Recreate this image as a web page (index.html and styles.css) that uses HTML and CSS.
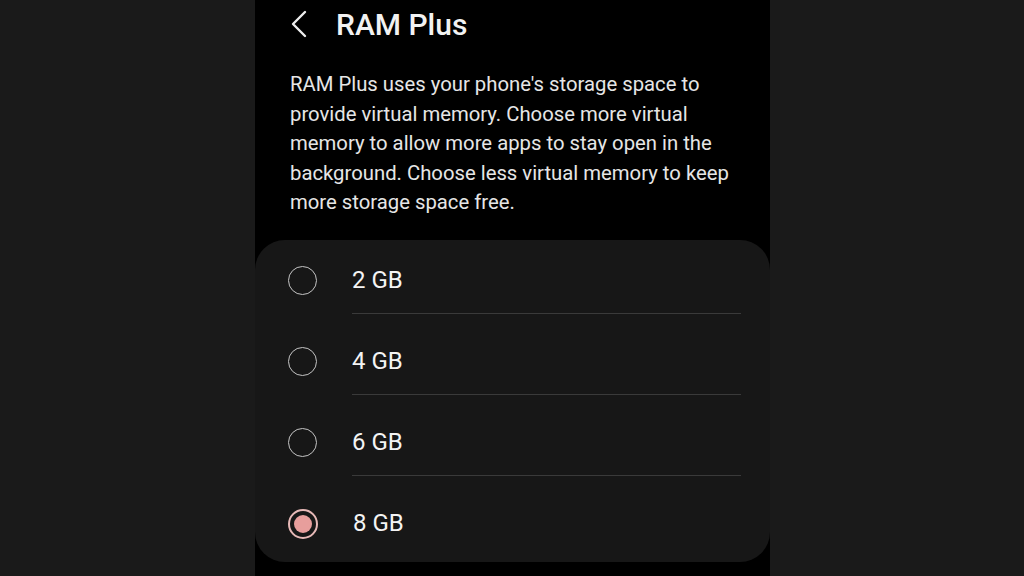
FILE: index.html
```html
<!DOCTYPE html>
<html lang="en">
<head>
<meta charset="utf-8">
<title>RAM Plus</title>
<link rel="stylesheet" href="styles.css">
</head>
<body>
<div class="screen">
  <header class="header">
    <svg class="back" width="16" height="28" viewBox="0 0 16 28" aria-hidden="true">
      <path d="M14 2 L2 14 L14 26" fill="none" stroke="#ededed" stroke-width="2.4" stroke-linecap="round" stroke-linejoin="round"/>
    </svg>
    <h1 class="title">RAM Plus</h1>
  </header>
  <p class="desc">RAM Plus uses your phone's storage space to provide virtual memory. Choose more virtual memory to allow more apps to stay open in the background. Choose less virtual memory to keep more storage space free.</p>
  <div class="card">
    <div class="row">
      <span class="radio"></span>
      <span class="label">2 GB</span>
    </div>
    <div class="row">
      <span class="radio"></span>
      <span class="label">4 GB</span>
    </div>
    <div class="row">
      <span class="radio"></span>
      <span class="label">6 GB</span>
    </div>
    <div class="row last">
      <span class="radio checked"><span class="dot"></span></span>
      <span class="label">8 GB</span>
    </div>
  </div>
</div>
</body>
</html>
```

FILE: styles.css
```css
html, body {
  margin: 0;
  padding: 0;
}
body {
  background: #1a1a1a;
  font-family: Roboto, "Noto Sans", "Liberation Sans", sans-serif;
  height: 576px;
  overflow: hidden;
}
.screen {
  margin-left: 255px;
  width: 515px;
  height: 576px;
  background: #000;
  display: flex;
  flex-direction: column;
}
.header {
  display: flex;
  align-items: center;
  height: 48px;
  padding-left: 36px;
  gap: 29px;
}
.back {
  display: block;
  margin-top: -1px;
}
.title {
  margin: 0;
  font-size: 30px;
  font-weight: 500;
  color: #f2f2f2;
  line-height: 48px;
  padding-top: 1px;
}
.desc {
  margin: 22px 0 0 0;
  padding: 0 30px 0 35px;
  font-size: 20.3px;
  line-height: 29.5px;
  color: #e6e6e6;
}
.card {
  margin-top: 22px;
  background: #171717;
  border-radius: 30px;
  padding: 8px 0 5px 0;
  display: flex;
  flex-direction: column;
}
.row {
  display: flex;
  align-items: center;
  padding-left: 33px;
  gap: 35px;
  margin-bottom: 15px;
}
.row.last {
  margin-bottom: 0;
}
.radio {
  width: 27px;
  height: 27px;
  border-radius: 50%;
  border: 1.6px solid #c4c4c4;
  flex: none;
  display: flex;
  align-items: center;
  justify-content: center;
}
.radio.checked {
  border: 2px solid #e7b9b7;
  width: 26px;
  height: 26px;
}
.dot {
  width: 18px;
  height: 18px;
  border-radius: 50%;
  background: #e79e9c;
}
.label {
  flex: 1;
  height: 65px;
  display: flex;
  align-items: center;
  margin-right: 29px;
  font-size: 24px;
  color: #f4f4f4;
  border-bottom: 1px solid #3a3a3a;
}
.row.last .label {
  border-bottom: 1px solid transparent;
}
```
